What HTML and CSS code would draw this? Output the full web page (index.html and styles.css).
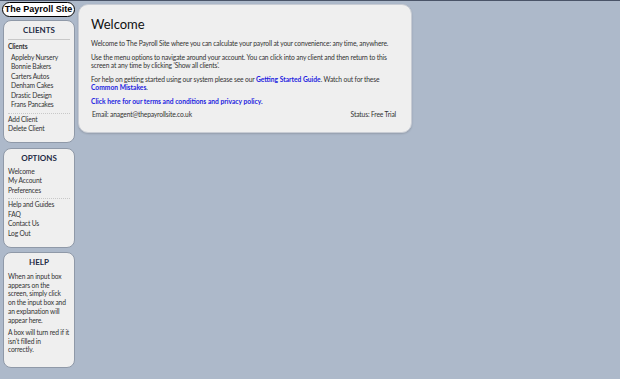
FILE: index.html
```html
<!DOCTYPE html>
<html lang="en">
<head>
    <meta charset="UTF-8">
    <title>The Payroll Site - Welcome</title>
    <link rel="stylesheet" href="styles.css">
</head>
<body>
    <div class="page">
        <div class="sidebar">
            <div class="logo">The Payroll Site</div>

            <div class="side-box clients">
                <div class="side-title ruled">CLIENTS</div>
                <div class="side-label">Clients</div>
                <div class="side-group">
                    <a class="side-link indent" href="#">Appleby Nursery</a>
                    <a class="side-link indent" href="#">Bonnie Bakers</a>
                    <a class="side-link indent" href="#">Carters Autos</a>
                    <a class="side-link indent" href="#">Denham Cakes</a>
                    <a class="side-link indent" href="#">Drastic Design</a>
                    <a class="side-link indent" href="#">Frans Pancakes</a>
                </div>
                <div class="side-group">
                    <a class="side-link" href="#">Add Client</a>
                    <a class="side-link" href="#">Delete Client</a>
                </div>
            </div>

            <div class="side-box options">
                <div class="side-title">OPTIONS</div>
                <div class="side-group">
                    <a class="side-link" href="#">Welcome</a>
                    <a class="side-link" href="#">My Account</a>
                    <a class="side-link" href="#">Preferences</a>
                </div>
                <div class="side-group">
                    <a class="side-link" href="#">Help and Guides</a>
                    <a class="side-link" href="#">FAQ</a>
                    <a class="side-link" href="#">Contact Us</a>
                    <a class="side-link" href="#">Log Out</a>
                </div>
            </div>

            <div class="side-box help">
                <div class="side-title">HELP</div>
                <p>When an input box<br>appears on the<br>screen, simply click<br>on the input box and<br>an explanation will<br>appear here.</p>
                <p>A box will turn red if it<br>isn't filled in<br>correctly.</p>
            </div>
        </div>

        <div class="main">
            <h1>Welcome</h1>
            <p>Welcome to The Payroll Site where you can calculate your payroll at your convenience: any time, anywhere.</p>
            <p>Use the menu options to navigate around your account. You can click into any client and then return to this screen at any time by clicking 'Show all clients'.</p>
            <p>For help on getting started using our system please see our <a href="#">Getting Started Guide</a>. Watch out for these <a href="#">Common Mistakes</a>.</p>
            <p><a href="#">Click here for our terms and conditions and privacy policy.</a></p>
            <div class="footer-row">
                <span>Email: anagent@thepayrollsite.co.uk</span>
                <span>Status: Free Trial</span>
            </div>
        </div>
    </div>
</body>
</html>
```

FILE: styles.css
```css
html, body {
    margin: 0;
    padding: 0;
}
body {
    font-family: 'Lato', 'Liberation Sans', sans-serif;
    font-size: 6.7px;
    letter-spacing: -0.15px;
    color: #333;
    background-color: #adb9ca;
    border-top: 1px solid #4a5468;
    min-height: 378px;
}
a {
    text-decoration: none;
}
.page {
    display: flex;
    align-items: flex-start;
    gap: 3px;
    padding: 1px 0 0 2px;
}

/* sidebar */
.sidebar {
    width: 73px;
    display: flex;
    flex-direction: column;
}
.logo {
    font-family: 'Liberation Sans', Arial, sans-serif;
    font-weight: bold;
    font-size: 9px;
    letter-spacing: 0;
    color: #000;
    background: #fff;
    border: 1px solid #000;
    border-radius: 8px;
    height: 13px;
    line-height: 13px;
    text-align: center;
    white-space: nowrap;
}
.side-box {
    background: #efefef;
    border: 1px solid #8f99a8;
    border-radius: 8px;
    margin-left: 1px;
    padding: 4px 4px 8px 4px;
}
.side-box.clients {
    margin-top: 3px;
}
.side-box.options {
    margin-top: 5px;
    padding-bottom: 9px;
}
.side-box.help {
    margin-top: 4px;
    padding-bottom: 13px;
}
.side-title {
    font-weight: bold;
    font-size: 8px;
    letter-spacing: 0;
    line-height: 10px;
    color: #1e2a44;
    text-align: center;
    margin-bottom: 4px;
}
.side-title.ruled {
    padding-bottom: 4px;
    border-bottom: 1px solid #c8c8c8;
    margin-bottom: 1px;
}
.side-label {
    font-weight: bold;
    line-height: 10px;
    padding-bottom: 1.5px;
}
.side-group {
    display: flex;
    flex-direction: column;
}
.side-group + .side-group {
    border-top: 1px dotted #c8c8c8;
    margin-top: 3px;
    padding-top: 1px;
}
.side-link {
    color: #333;
    line-height: 9.5px;
}
.side-link.indent {
    padding-left: 3px;
}
.help .side-title {
    margin-bottom: 5px;
}
.help p {
    margin: 0 0 3.7px 0;
    line-height: 8.7px;
    white-space: nowrap;
}
.help p:last-child {
    margin-bottom: 0;
}

/* main panel */
.main {
    width: 305px;
    background: #efefef;
    border: 1px solid #c8ccd4;
    border-radius: 10px;
    box-shadow: 0 1px 2px rgba(0,0,0,0.15);
    padding: 6px 15px 13px 12px;
    margin-top: 2px;
}
.main h1 {
    font-size: 13px;
    font-weight: normal;
    letter-spacing: 0;
    color: #111;
    margin: 5px 0 7px 0;
    line-height: 16px;
}
.main p {
    margin: 0 0 5px 0;
    line-height: 8.5px;
}
.main a {
    color: #2323e0;
    font-weight: bold;
    letter-spacing: 0;
}
.footer-row {
    display: flex;
    justify-content: space-between;
    padding-left: 1px;
    line-height: 9px;
}
```
